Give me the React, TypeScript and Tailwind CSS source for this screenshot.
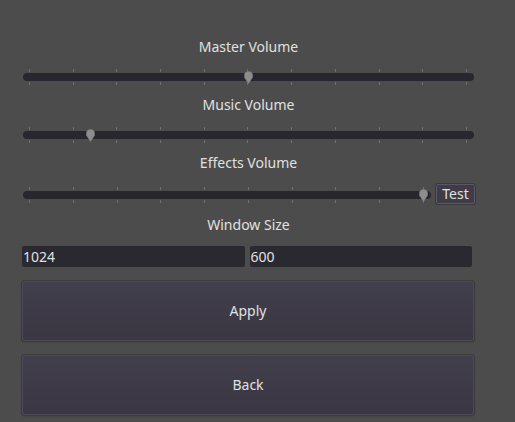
import React from 'react';

const font = { fontFamily: '"Noto Sans", "DejaVu Sans", sans-serif' };

const Grabber: React.FC = () => (
  <svg width="9" height="13" viewBox="0 0 9 13" className="block">
    <path d="M4.5 0.5C7 0.5 8.5 1.8 8.5 4.2V6.5L4.5 12.5L0.5 6.5V4.2C0.5 1.8 2 0.5 4.5 0.5Z" fill="#8d8d8d" stroke="#7a7a7a" strokeWidth="0.6" />
  </svg>
);

const Slider: React.FC<{ value: number; ticks?: number }> = ({ value, ticks = 11 }) => (
  <div className="relative h-4 flex-1">
    <div className="absolute left-0 right-0 top-[5px] h-[8px] rounded-full bg-[#28272e]" />
    <div className="absolute inset-0 flex justify-between pl-[6px] pr-[7px]">
      {Array.from({ length: ticks }).map((_, i) => (
        <div key={i} className="relative w-px h-full">
          <div className="absolute top-[1px] h-[3px] w-px bg-[#6e6e6e]" />
          <div className="absolute -bottom-[1px] h-[3px] w-px bg-[#6e6e6e]" />
        </div>
      ))}
    </div>
    <div
      className="absolute top-[3px]"
      style={{ left: `calc(6px + (100% - 14px) * ${value} - 4px)` }}
    >
      <Grabber />
    </div>
  </div>
);

const Label: React.FC<{ children: React.ReactNode; className?: string }> = ({ children, className }) => (
  <div className={`h-5 leading-5 text-center text-[14px] text-[#e0e0e0] ${className ?? ''}`}>{children}</div>
);

const BigButton: React.FC<{ children: React.ReactNode; className?: string }> = ({ children, className }) => (
  <button
    className={`h-[60px] w-full rounded-[3px] border border-[#4b4857] bg-gradient-to-b from-[#423f4c] to-[#3a3743] pb-[2px] text-[14px] text-[#e0e0e0] shadow-[0_0_0_1px_#3c3c3c,0_1px_2px_rgba(0,0,0,0.35)] ${className ?? ''}`}
  >
    {children}
  </button>
);

const App: React.FC = () => {
  return (
    <div className="w-[515px] h-[422px] bg-[#4c4c4c] overflow-hidden" style={font}>
      <div className="flex flex-col pl-[23px] pr-[41px] pt-[37px]">
        <Label>Master Volume</Label>
        <div className="mt-[11px] flex">
          <Slider value={0.5} />
        </div>
        <Label className="mt-[11px]">Music Volume</Label>
        <div className="mt-[11px] flex">
          <Slider value={0.14} />
        </div>
        <Label className="mt-[11px]">Effects Volume</Label>
        <div className="mt-[11px] -mr-px flex items-center gap-[5px] h-5">
          <Slider value={1} ticks={10} />
          <button className="h-[20px] w-[39px] rounded-[2px] border border-[#5a5766] bg-[#3f3c48] text-[14px] leading-none text-[#e0e0e0] shadow-[0_0_0_1px_#3a3a3a]">
            Test
          </button>
        </div>
        <Label className="mt-[11px]">Window Size</Label>
        <div className="mt-[11px] -ml-px mr-[2px] flex gap-[5px]">
          <div className="h-[21px] flex-1 rounded-[2px] bg-[#2a2930] pl-[1px] text-[14px] leading-[21px] text-[#e0e0e0]">1024</div>
          <div className="h-[21px] flex-1 rounded-[2px] bg-[#2a2930] pl-[1px] text-[14px] leading-[21px] text-[#e0e0e0]">600</div>
        </div>
        <div className="-ml-px">
          <BigButton className="mt-[14px]">Apply</BigButton>
          <BigButton className="mt-[14px]">Back</BigButton>
        </div>
      </div>
    </div>
  );
};

export default App;
